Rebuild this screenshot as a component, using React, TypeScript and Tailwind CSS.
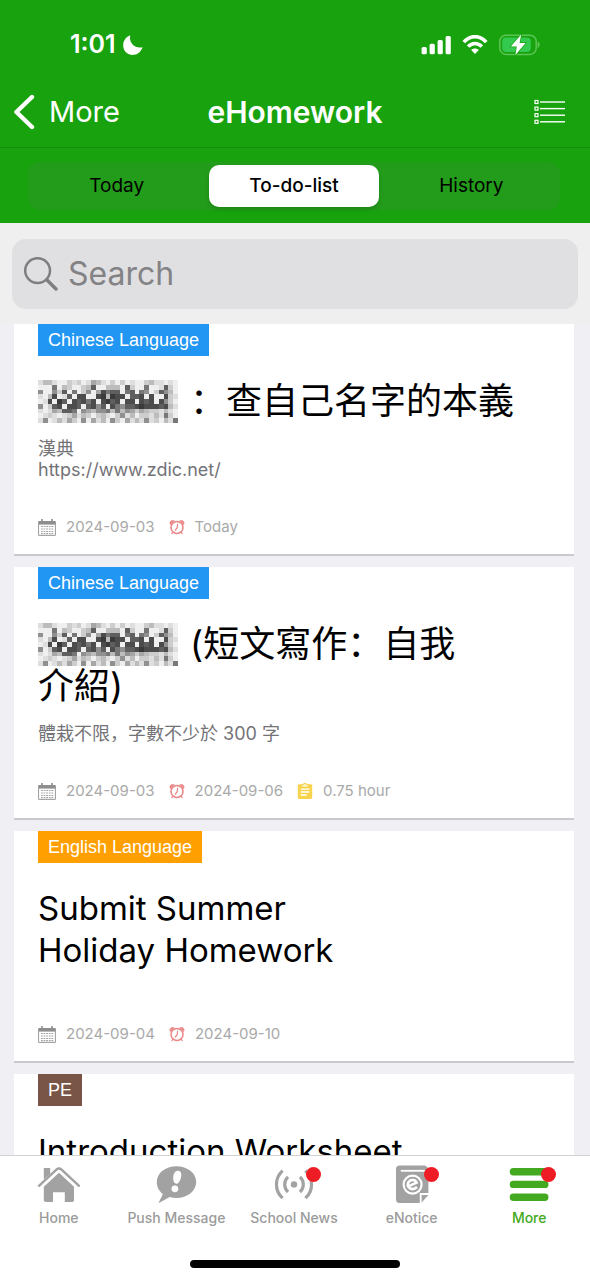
import type { ReactNode } from "react";
import { clsx } from "clsx";

type Homework = {
  subject: string;
  tagClass: string;
  titleClass: string;
  censored?: boolean;
  title: string[];
  description?: string[];
  assigned?: string;
  due?: string;
  effort?: string;
};

const homeworks: Homework[] = [
  {
    subject: "Chinese Language",
    tagClass: "bg-[#2196f3]",
    titleClass: "text-4xl",
    censored: true,
    title: ["：查自己名字的本義"],
    description: ["漢典", "https://www.zdic.net/"],
    assigned: "2024-09-03",
    due: "Today",
  },
  {
    subject: "Chinese Language",
    tagClass: "bg-[#2196f3]",
    titleClass: "text-4xl",
    censored: true,
    title: ["(短文寫作：自我", "介紹)"],
    description: ["體栽不限，字數不少於 300 字"],
    assigned: "2024-09-03",
    due: "2024-09-06",
    effort: "0.75 hour",
  },
  {
    subject: "English Language",
    tagClass: "bg-[#ffa000]",
    titleClass: "text-[33px]",
    title: ["Submit Summer", "Holiday Homework"],
    assigned: "2024-09-04",
    due: "2024-09-10",
  },
  {
    subject: "PE",
    tagClass: "bg-[#795548]",
    titleClass: "text-[33px]",
    title: ["Introduction Worksheet"],
  },
];

// One digit per cell, 0 is lightest and 9 is darkest
const mosaicRows = [
  "13310021201431020201002311010",
  "00060320023700333072006001720",
  "50052706025048677067065027530",
  "10380170880089398807780800821",
  "01809708786808978088087808520",
  "50278088707857086577898887831",
  "10143776054355636354243221310",
  "01210124132023102513022131620",
  "15013142050413052041315120316",
];

const mosaicShades = ["#efefef", "#dedede", "#cdcdcd", "#bcbcbc", "#a6a6a6", "#909090", "#777777", "#5f5f5f", "#4c4c4c", "#3a3a3a"];

const Mosaic = () => (
  <svg viewBox="0 0 29 9" preserveAspectRatio="none" className="h-[43px] w-[140px] shrink-0" shapeRendering="crispEdges" aria-hidden="true">
    {mosaicRows.map((row, y) =>
      row.split("").map((shade, x) => (
        <rect key={`${x}-${y}`} x={x} y={y} width="1" height="1" fill={mosaicShades[Number(shade)]} />
      ))
    )}
  </svg>
);

const CalendarIcon = () => (
  <svg viewBox="0 0 18 17" className="h-[17px] w-[18px]" fill="none" aria-hidden="true">
    <path d="M0.5 2h17v3.6h-17z" fill="#8e8e8e" />
    <path d="M4 0v3M14 0v3" stroke="#8e8e8e" strokeWidth="1.6" />
    <path d="M0.6 2.6v13.8h16.8V2.6" stroke="#9a9a9a" strokeWidth="1" />
    <path d="M3 7.5h12.4M3 10h12.4M3 12.5h12.4M3 14.6h12.4" stroke="#a3a3a3" strokeWidth="1.1" strokeDasharray="1.8 0.8" />
  </svg>
);

const AlarmIcon = () => (
  <svg viewBox="0 0 16 16" className="size-4" fill="none" stroke="#ea8686" strokeLinecap="round" aria-hidden="true">
    <circle cx="8" cy="8.4" r="6" strokeWidth="1.5" />
    <path d="M1.2 5.2C0 2.8 2.4 0.6 5 1.8ZM14.8 5.2C16 2.8 13.6 0.6 11 1.8Z" fill="#ea8686" strokeWidth="0.8" />
    <path d="M8.6 5.2 8.2 8.7 6.3 11M3.7 13.2 2.8 14.6M12.3 13.2l0.9 1.4" strokeWidth="1.2" />
  </svg>
);

const ClipboardIcon = () => (
  <svg viewBox="0 0 16 16" className="size-4" aria-hidden="true">
    <path d="M2.2 1.2H5.6C6-0.3 10-0.3 10.4 1.2h3.4c0.8 0 1.4 0.6 1.4 1.3v12c0 0.8-0.6 1.4-1.4 1.4H2.2c-0.8 0-1.4-0.6-1.4-1.4v-12c0-0.7 0.6-1.3 1.4-1.3Z" fill="#f8d44c" />
    <path d="M5.4 2.9h5.2M3.8 6.1h8.6M3.8 9h8.6M3.8 12h5.8" stroke="#fff" strokeWidth="1.4" />
    <circle cx="8" cy="1.5" r="0.7" fill="#fff" />
  </svg>
);

const StatusBar = () => (
  <div className="flex h-[77px] items-center justify-between pt-3 pr-[50px] pl-[70px]">
    <div className="flex items-center gap-[6px]">
      <span className="text-[25px] font-semibold">1:01</span>
      <svg viewBox="0 0 22 22" className="size-[22px]" fill="currentColor" aria-hidden="true">
        <path d="M8.3 1.2C6.6 7.6 11.6 15 20.6 13.2 18 21.2 9 23 4.2 18.5-1 13.6 0.6 4 8.3 1.2Z" />
      </svg>
    </div>
    <div className="flex items-center gap-[11px]">
      <svg viewBox="0 0 30 20" className="h-5 w-[30px]" fill="currentColor" aria-hidden="true">
        <rect x="0.6" y="12" width="5.2" height="7.2" rx="1.5" />
        <rect x="8.6" y="8.8" width="5.2" height="10.4" rx="1.5" />
        <rect x="16.6" y="5" width="5.2" height="14.2" rx="1.5" />
        <rect x="24.6" y="1" width="5.2" height="18.2" rx="1.5" />
      </svg>
      <svg viewBox="0 0 26 20" className="h-5 w-[26px]" fill="none" stroke="currentColor" strokeWidth="3.6" aria-hidden="true">
        <path d="M1.8 7.2C8-0.2 18-0.2 24.2 7.2" />
        <path d="M6.2 11.6c3.8-4.2 9.8-4.2 13.6 0" />
        <path d="M13 19 9.2 15c2-2 5.6-2 7.6 0Z" fill="currentColor" stroke="none" />
      </svg>
      <svg viewBox="0 0 41 22" className="h-[22px] w-[41px]" aria-hidden="true">
        <rect x="0.8" y="1.2" width="36.4" height="19.2" rx="6.2" fill="none" stroke="#5cc454" strokeWidth="1.5" />
        <path d="M38.6 7.6c2.8 1.2 2.8 5.2 0 6.4Z" fill="#5cc454" />
        <rect x="3.2" y="3.6" width="28.6" height="14.4" rx="4" fill="#34c94f" />
        <path d="M22.2 0.6 11.8 12.6h6L16.4 21 26.6 9h-6Z" fill="#fff" stroke="#18a30e" strokeWidth="1.4" paintOrder="stroke" />
      </svg>
    </div>
  </div>
);

const NavBar = () => (
  <div className="grid h-[70px] grid-cols-[1fr_auto_1fr] items-center px-[13px]">
    <button type="button" className="flex items-center gap-[14px] justify-self-start text-[29px]">
      <svg viewBox="0 0 22 36" className="h-9 w-[22px]" fill="none" stroke="currentColor" strokeWidth="4.4" strokeLinecap="round" strokeLinejoin="round" aria-hidden="true">
        <path d="M19 3 3.4 18 19 33" />
      </svg>
      More
    </button>
    <h1 className="text-3xl font-semibold">eHomework</h1>
    <button type="button" aria-label="List view" className="justify-self-end pr-[11px]">
      <svg viewBox="0 0 32 26" className="h-[26px] w-8" fill="none" stroke="currentColor" aria-hidden="true">
        {[3, 9.6, 16.2, 22.8].map((y) => (
          <g key={y}>
            <rect x="1" y={y - 1.5} width="3" height="3" strokeWidth="1.2" />
            <path d={`M6 ${y}h25`} strokeWidth="1.4" />
          </g>
        ))}
      </svg>
    </button>
  </div>
);

const filters = ["Today", "To-do-list", "History"];

const FilterTabs = () => (
  <div className="border-t border-[#158f0c] pt-[14px] pr-[30px] pb-3 pl-7">
    <div role="tablist" className="grid h-12 grid-cols-3 rounded-xl bg-[#239b1b]">
      {filters.map((name) => (
        <button
          key={name}
          type="button"
          role="tab"
          aria-selected={name === "To-do-list"}
          className={clsx(
            "mx-1 my-[3px] rounded-[10px] text-[19px] text-black",
            name === "To-do-list" ? "bg-white font-medium shadow-md" : "font-normal"
          )}
        >
          {name}
        </button>
      ))}
    </div>
  </div>
);

const SearchBox = () => (
  <label className="mx-3 mt-4 mb-[15px] flex h-[70px] items-center gap-[10px] rounded-[14px] bg-[#e0e0e2] px-3">
    <svg viewBox="0 0 34 34" className="size-[34px] shrink-0" fill="none" stroke="#7f7f81" strokeLinecap="round" aria-hidden="true">
      <circle cx="13.6" cy="13.6" r="12.4" strokeWidth="2.5" />
      <path d="m23 23 9 9" strokeWidth="3.4" />
    </svg>
    <input type="search" aria-label="Search" placeholder="Search" className="min-w-0 flex-1 bg-transparent text-[32px] outline-none placeholder:text-[#838386]" />
  </label>
);

const Meta = ({ icon, children }: { icon: ReactNode; children: ReactNode }) => (
  <span className="flex items-center gap-[10px]">
    {icon}
    {children}
  </span>
);

const HomeworkCard = ({ item }: { item: Homework }) => (
  <article className="border-b-2 border-[#c9c9cd] bg-white px-6 pb-[17px]">
    <span className={clsx("inline-flex h-8 items-center px-[10px] align-top font-['Liberation_Sans',sans-serif] text-lg text-white", item.tagClass)}>
      {item.subject}
    </span>
    <h2 className={clsx("mt-6 leading-[42px] text-black", item.titleClass)}>
      {item.title.map((line, i) => (
        <span key={line} className="flex h-[42px] items-center gap-3 whitespace-nowrap">
          {item.censored && i === 0 && <Mosaic />}
          {line}
        </span>
      ))}
    </h2>
    <div className="pt-4 text-lg leading-[21px] text-[#737377]">
      {item.description?.map((line) => (
        <p key={line}>{line}</p>
      ))}
    </div>
    <div className="mt-[37px] flex h-5 items-center gap-[14px] text-[15px] text-[#a9a9a9]">
      {item.assigned && <Meta icon={<CalendarIcon />}>{item.assigned}</Meta>}
      {item.due && <Meta icon={<AlarmIcon />}>{item.due}</Meta>}
      {item.effort && <Meta icon={<ClipboardIcon />}>{item.effort}</Meta>}
    </div>
  </article>
);

const HomeIcon = () => (
  <svg viewBox="0 0 44 40" className="h-10 w-11" fill="#a2a2a2" aria-hidden="true">
    <path d="M6.8 3h6.4v6L6.8 14.6Z" />
    <path d="M2 20.8 19.4 4.6c1.6-1.4 3.6-1.4 5.2 0L42 20.8" fill="none" stroke="#a2a2a2" strokeWidth="2.4" strokeLinecap="round" />
    <path d="M22 7.8 37 21.8V35c0 1.4-0.8 2-2 2h-7.2V27.2H16V37H9c-1.4 0-2.2-0.8-2.2-2V21.800Z" />
  </svg>
);

const MessageIcon = () => (
  <svg viewBox="0 0 44 40" className="h-10 w-11" aria-hidden="true">
    <path d="M22.4 1.2c11 0 19.8 6.8 19.8 15.8s-8.8 16-19.8 16c-2.4 0-4.6-0.3-6.7-0.9L4.4 38.2 8.9 29C5 26.2 2.8 21.8 2.8 17 2.8 8 11.4 1.2 22.4 1.2Z" fill="#a2a2a2" />
    <path d="M23.6 5.8c3 0 4.2 2.4 3.6 5.6-0.7 3.5-2.6 7.4-4.8 7.4s-3.6-3.3-3.1-7.2c0.4-3.4 1.8-5.8 4.3-5.8Z" fill="#fff" />
    <circle cx="20.9" cy="23.8" r="3.4" fill="#fff" />
  </svg>
);

const NewsIcon = () => (
  <svg viewBox="0 0 44 40" className="h-10 w-11" fill="none" stroke="#a2a2a2" strokeWidth="3.2" aria-hidden="true">
    <circle cx="22" cy="19.4" r="3.2" fill="#a2a2a2" stroke="none" />
    <path d="M16 11.8c-4.4 4.2-4.4 11 0 15.2M28 11.8c4.4 4.2 4.4 11 0 15.200" />
    <path d="M10.600 5.600c-8.200 7.600-8.200 20 0 27.600M33.400 5.600c8.200 7.600 8.200 20 0 27.600" />
  </svg>
);

const NoticeIcon = () => (
  <svg viewBox="0 0 44 40" className="h-10 w-11" fill="none" aria-hidden="true">
    <path d="M9.4 0.6h24c3 0 5 2 5 5V28h-8.6V38H9.4c-2 0-3.4-1.400-3.400-3.400V4c0-2 1.400-3.400 3.400-3.400Z" fill="#a2a2a2" />
    <path d="M31.600 37.400V30h6.800Z" fill="#a2a2a2" />
    <path d="M10.800 5.800h24" stroke="#fff" strokeWidth="1.8" />
    <circle cx="22.600" cy="19.600" r="9" stroke="#fff" strokeWidth="2.2" />
    <path d="M18.200 21.400 26.600 17.600C25 13.800 19.400 14.200 18 18.200c-1.400 4.600 4.600 8.200 9 3.800" stroke="#fff" strokeWidth="2.6" />
  </svg>
);

const MoreIcon = () => (
  <svg viewBox="0 0 44 40" className="h-10 w-11" stroke="#43a920" strokeWidth="7.4" strokeLinecap="round" aria-hidden="true">
    <path d="M6.4 6.8h31.4M6.4 19.4h31.4M6.4 32.200h31.400" />
  </svg>
);

const tabs = [
  { label: "Home", icon: <HomeIcon />, badge: false },
  { label: "Push Message", icon: <MessageIcon />, badge: false },
  { label: "School News", icon: <NewsIcon />, badge: true },
  { label: "eNotice", icon: <NoticeIcon />, badge: true },
  { label: "More", icon: <MoreIcon />, badge: true },
];

const TabBar = () => (
  <nav className="border-t border-[#d2d2d2] bg-white">
    <div className="grid grid-cols-5 pt-[9px] pr-[2px]">
      {tabs.map((tab) => (
        <a
          key={tab.label}
          href="#"
          aria-current={tab.label === "More" ? "page" : undefined}
          className={clsx(
            "flex flex-col items-center gap-[3px] text-sm font-medium whitespace-nowrap",
            tab.label === "More" ? "text-[#43a920]" : "text-[#9b9b9b]"
          )}
        >
          <span className="relative">
            {tab.icon}
            {tab.badge && <span className="absolute top-[2px] -right-[5px] size-[15px] rounded-full bg-[#ee1c25]" />}
          </span>
          {tab.label}
        </a>
      ))}
    </div>
    <div className="mx-auto mt-8 mb-3 h-2 w-[210px] rounded-full bg-black" />
  </nav>
);

export default function App() {
  return (
    <div className="flex h-screen flex-col bg-[#efeff4] font-['Inter','Noto_Sans_CJK_SC',sans-serif]">
      <header className="bg-[#18a30e] pb-px text-white">
        <StatusBar />
        <NavBar />
        <FilterTabs />
      </header>
      <main className="min-h-0 flex-1 overflow-hidden">
        <div className="flow-root bg-[#efefef]">
          <SearchBox />
        </div>
        <div className="flex flex-col gap-[11px] pr-4 pl-[14px]">
          {homeworks.map((item) => (
            <HomeworkCard key={item.title[0]} item={item} />
          ))}
        </div>
      </main>
      <TabBar />
    </div>
  );
}
